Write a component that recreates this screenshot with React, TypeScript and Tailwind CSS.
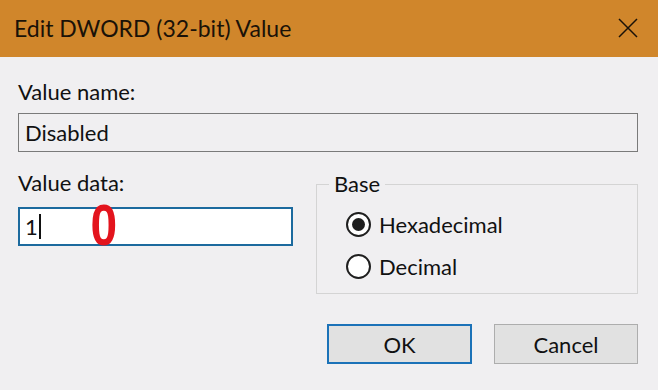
const font = { fontFamily: "Lato, 'Liberation Sans', sans-serif" };

const Radio = ({ label, checked }: { label: string; checked?: boolean }) => (
  <label className="flex items-center gap-[8px]">
    <span className="flex h-[25px] w-[25px] items-center justify-center rounded-full border-2 border-[#1f1f1f] bg-white">
      {checked && <span className="h-[13px] w-[13px] rounded-full bg-[#1f1f1f]" />}
    </span>
    <span className="text-[22px] leading-none text-[#111]">{label}</span>
  </label>
);

const App = () => {
  return (
    <div className="flex h-[390px] w-[658px] flex-col bg-[#f0eff1] text-[#111]" style={font}>
      <div className="flex h-[57px] items-center justify-between bg-[#d0862b] pl-[14px] pr-[20px]">
        <span className="text-[23px] leading-none text-[#1a1208]">Edit DWORD (32-bit) Value</span>
        <svg width="20" height="20" viewBox="0 0 20 20" className="mb-[1px]">
          <path d="M1 1L19 19M19 1L1 19" stroke="#1a1208" strokeWidth="1.5" fill="none" />
        </svg>
      </div>

      <div className="flex flex-col px-[18px] pt-[24px]">
        <span className="text-[22px] leading-none">Value name:</span>
        <div className="mt-[10px] flex h-[39px] w-[620px] items-center border border-[#7a7a7a] bg-[#f0eff1] px-[6px] text-[22px]">
          Disabled
        </div>

        <div className="mt-[20px] flex gap-[23px]">
          <div className="flex flex-col">
            <span className="text-[22px] leading-none">Value data:</span>
            <div className="relative mt-[13px] flex h-[39px] w-[275px] items-center border-2 border-[#1c6a9e] bg-white px-[5px] text-[22px]">
              <span>1</span>
              <span className="ml-[1px] h-[25px] w-[2px] bg-[#111]" />
              <span
                className="absolute left-[68px] top-[-12px] scale-x-[0.84] text-[57px] font-bold leading-none text-[#e3141d]"
                style={{ fontFamily: "'Liberation Sans', Arial, sans-serif" }}
              >
                0
              </span>
            </div>
          </div>

          <div className="relative mt-[12px] flex h-[110px] w-[322px] flex-col gap-[17px] border border-[#d4d4d4] pl-[29px] pt-[27px]">
            <span className="absolute left-[12px] top-[-12px] bg-[#f0eff1] px-[5px] text-[22px] leading-none">
              Base
            </span>
            <Radio label="Hexadecimal" checked />
            <Radio label="Decimal" />
          </div>
        </div>

        <div className="mt-[30px] flex justify-end gap-[22px] pr-[2px]">
          <button className="flex h-[40px] w-[145px] items-center justify-center border-2 border-[#1b72b8] bg-[#e1e1e1] text-[22px]">
            OK
          </button>
          <button className="flex h-[40px] w-[144px] items-center justify-center border border-[#adadad] bg-[#e1e1e1] text-[22px]">
            Cancel
          </button>
        </div>
      </div>
    </div>
  );
};

export default App;
